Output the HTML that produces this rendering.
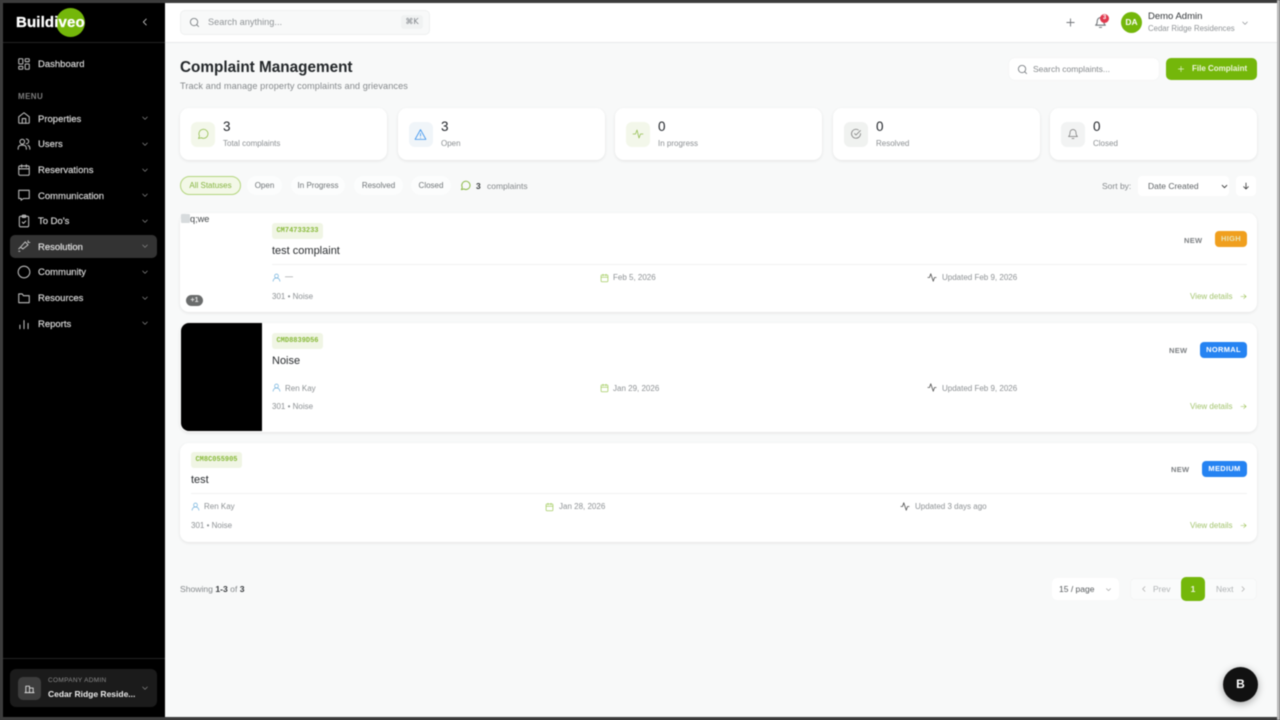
<!DOCTYPE html>
<html lang="en"><head><meta charset="utf-8"><title>Complaint Management</title>
<style>
*{box-sizing:border-box}
html,body{margin:0;padding:0;width:1280px;height:720px;overflow:hidden;background:#3a3a3a;font-family:"Liberation Sans","DejaVu Sans",sans-serif;color:#1f2328}
.a{position:absolute;white-space:nowrap}
svg{position:absolute;fill:none;stroke:currentColor;stroke-width:2;stroke-linecap:round;stroke-linejoin:round}
#app{position:absolute;left:0;top:0;width:1280px;height:720px;overflow:hidden;filter:blur(.5px)}
.nav{font-size:9.500px;color:#d6d6d6;left:38px;margin-top:1px;-webkit-text-stroke:.2px #d6d6d6}
.navi{color:#bdbdbd;stroke-width:1.800}
.chev{color:#8a8a8a}
.card{position:absolute;background:#fff;border-radius:9px;box-shadow:0 1px 3px rgba(0,0,0,.09)}
.tile{position:absolute;left:11px;top:14px;width:24px;height:25px;border-radius:6px}
.num{position:absolute;left:43px;top:11px;font-size:13.500px;color:#1f2328}
.lab{position:absolute;left:43px;top:30.500px;font-size:8px;color:#8b8f92;white-space:nowrap}
.tab{position:absolute;top:176px;height:19px;line-height:20px;font-size:8px;color:#6f7477;text-align:center;background:#fcfdfd;border-radius:10px}
.s{font-size:8px;color:#8d9194}
.code{position:absolute;height:16px;background:#f0f5e4;border-radius:3px;font:700 7px/16px "Liberation Mono",monospace;color:#88ba3a;text-align:center}
.title{font-size:11px;color:#2a2d30;margin-top:.500px}
.new{font-size:7.500px;font-weight:700;color:#7c7f82;letter-spacing:.3px}
.pr{position:absolute;height:16px;line-height:16px;border-radius:4px;color:#fff;font-size:7.500px;font-weight:700;text-align:center;letter-spacing:.3px}
.vd{font-size:8px;color:#a4c56f}
.line{position:absolute;height:1px;background:#f1f2f2}
</style></head><body>
<div id="app">
<!-- main -->
<div class="a" style="left:165px;top:3px;width:1112px;height:714px;background:#f8f9f9"></div>
<div class="a" style="left:165px;top:3px;width:1112px;height:40px;background:#fff;border-bottom:1px solid #e7e9ea"></div>
<div class="a" style="left:0;top:0;width:1280px;height:3px;background:#3c3c3c"></div>
<div class="a" style="left:0;top:717px;width:1280px;height:3px;background:#3c3c3c"></div>
<div class="a" style="left:1277px;top:0;width:3px;height:720px;background:#b9b9b9"></div>
<!-- sidebar -->
<div class="a" style="left:0;top:0;width:3px;height:720px;background:#3c3c3c"></div>
<div class="a" style="left:3px;top:3px;width:162px;height:714px;background:#000"></div>
<div class="a" style="left:3px;top:42px;width:162px;height:1px;background:#222"></div>
<div class="a" style="left:3px;top:658px;width:162px;height:1px;background:#222"></div>
<div class="a" style="left:56px;top:8px;width:29px;height:29px;border-radius:50%;background:#74b70a"></div>
<div class="a" style="left:16px;top:14px;font-size:15px;font-weight:700;color:#fff;letter-spacing:.15px;-webkit-text-stroke:.3px #fff">Buildiveo</div>
<svg style="left:140px;top:17px;color:#cfcfcf" width="10" height="10" viewBox="0 0 24 24"><path d="M15 5l-7 7 7 7"/></svg>

<svg class="navi" style="left:17px;top:57px" width="14" height="14" viewBox="0 0 24 24"><rect x="3" y="3" width="7" height="9" rx="1"/><rect x="14" y="3" width="7" height="5" rx="1"/><rect x="14" y="12" width="7" height="9" rx="1"/><rect x="3" y="16" width="7" height="5" rx="1"/></svg>
<div class="a nav" style="top:58px">Dashboard</div>
<div class="a" style="left:18px;top:91.500px;font-size:8px;font-weight:700;color:#7d7d7d;letter-spacing:.4px">MENU</div>

<svg class="navi" style="left:17px;top:111px" width="14" height="14" viewBox="0 0 24 24"><path d="M3 10l9-7 9 7v10a1 1 0 0 1-1 1H4a1 1 0 0 1-1-1z"/><path d="M9 21v-8h6v8"/></svg>
<div class="a nav" style="top:112.500px">Properties</div>
<svg class="navi" style="left:17px;top:137px" width="14" height="14" viewBox="0 0 24 24"><circle cx="9" cy="8" r="4"/><path d="M2 21v-2a5 5 0 0 1 5-5h4a5 5 0 0 1 5 5v2M16 3.500a4 4 0 0 1 0 8M22 21v-2a5 5 0 0 0-3-4.500"/></svg>
<div class="a nav" style="top:138px">Users</div>
<svg class="navi" style="left:17px;top:163px" width="14" height="14" viewBox="0 0 24 24"><rect x="3" y="5" width="18" height="16" rx="2"/><path d="M3 10h18M8 3v4M16 3v4"/></svg>
<div class="a nav" style="top:163.500px">Reservations</div>
<svg class="navi" style="left:17px;top:188px" width="14" height="14" viewBox="0 0 24 24"><path d="M21 4H3v14h4v3l4-3h10z"/></svg>
<div class="a nav" style="top:189.500px">Communication</div>
<svg class="navi" style="left:17px;top:214px" width="14" height="14" viewBox="0 0 24 24"><rect x="4" y="4" width="16" height="18" rx="2"/><rect x="9" y="2" width="6" height="4" rx="1"/><path d="M9 14l2 2 4-4"/></svg>
<div class="a nav" style="top:215px">To Do's</div>

<div class="a" style="left:10px;top:235px;width:147px;height:23px;background:#333;border-radius:5px"></div>
<svg class="navi" style="left:17px;top:239px" width="14" height="14" viewBox="0 0 24 24"><path d="M14 5l5 5-9 7-4-3zM6 14l-3 3M19 3v3M22 6h-3M3 21h2"/></svg>
<div class="a nav" style="top:240.500px;color:#e6e6e6">Resolution</div>
<svg class="navi" style="left:17px;top:265px" width="14" height="14" viewBox="0 0 24 24"><circle cx="12" cy="12" r="10"/></svg>
<div class="a nav" style="top:266px">Community</div>
<svg class="navi" style="left:17px;top:291px" width="14" height="14" viewBox="0 0 24 24"><path d="M3 5h6l2 3h10v12H3z"/></svg>
<div class="a nav" style="top:292px">Resources</div>
<svg class="navi" style="left:17px;top:317px" width="14" height="14" viewBox="0 0 24 24"><path d="M5 20v-6M12 20V6M19 20v-9"/></svg>
<div class="a nav" style="top:317.500px">Reports</div>

<svg class="chev" style="left:141px;top:114px" width="8" height="8" viewBox="0 0 24 24"><path d="M5 9l7 7 7-7"/></svg>
<svg class="chev" style="left:141px;top:140px" width="8" height="8" viewBox="0 0 24 24"><path d="M5 9l7 7 7-7"/></svg>
<svg class="chev" style="left:141px;top:166px" width="8" height="8" viewBox="0 0 24 24"><path d="M5 9l7 7 7-7"/></svg>
<svg class="chev" style="left:141px;top:191px" width="8" height="8" viewBox="0 0 24 24"><path d="M5 9l7 7 7-7"/></svg>
<svg class="chev" style="left:141px;top:217px" width="8" height="8" viewBox="0 0 24 24"><path d="M5 9l7 7 7-7"/></svg>
<svg class="chev" style="left:141px;top:242px" width="8" height="8" viewBox="0 0 24 24"><path d="M5 9l7 7 7-7"/></svg>
<svg class="chev" style="left:141px;top:268px" width="8" height="8" viewBox="0 0 24 24"><path d="M5 9l7 7 7-7"/></svg>
<svg class="chev" style="left:141px;top:294px" width="8" height="8" viewBox="0 0 24 24"><path d="M5 9l7 7 7-7"/></svg>
<svg class="chev" style="left:141px;top:319px" width="8" height="8" viewBox="0 0 24 24"><path d="M5 9l7 7 7-7"/></svg>

<div class="a" style="left:10px;top:669px;width:147px;height:38px;background:#1b1b1b;border-radius:6px"></div>
<div class="a" style="left:18px;top:677px;width:23px;height:23px;background:#3d3d3d;border-radius:5px"></div>
<svg style="left:24px;top:683px;color:#ddd;stroke-width:2" width="11" height="11" viewBox="0 0 24 24"><path d="M4 21V7h8v14M12 11h8v10M2 21h20"/></svg>
<div class="a" style="left:48px;top:677px;font-size:6.500px;color:#8c8c8c;letter-spacing:.3px">COMPANY ADMIN</div>
<div class="a" style="left:48px;top:689px;font-size:8.500px;font-weight:700;color:#ececec">Cedar Ridge Reside...</div>
<svg class="chev" style="left:141px;top:684px" width="8" height="8" viewBox="0 0 24 24"><path d="M5 9l7 7 7-7"/></svg>

<!-- topbar -->
<div class="a" style="left:180px;top:10px;width:250px;height:25px;background:#f8f9f9;border:1px solid #eef0f0;border-radius:5px"></div>
<svg style="left:189px;top:17px;color:#71767a;stroke-width:1.800" width="11" height="11" viewBox="0 0 24 24"><circle cx="11" cy="11" r="8"/><path d="M21 21l-4.300-4.300"/></svg>
<div class="a" style="left:208px;top:17px;font-size:9.200px;color:#8f9396">Search anything...</div>
<div class="a" style="left:401px;top:15px;width:22px;height:14px;background:#f0f2f2;border-radius:3px;font-size:8px;color:#80858a;text-align:center;line-height:14px;font-family:'DejaVu Sans',sans-serif">⌘K</div>

<svg style="left:1065px;top:17px;color:#72767a" width="11" height="11" viewBox="0 0 24 24"><path d="M12 4v16M4 12h16"/></svg>
<svg style="left:1094px;top:16px;color:#72767a" width="13" height="13" viewBox="0 0 24 24"><path d="M6 9a6 6 0 0 1 12 0c0 6 3 8 3 8H3s3-2 3-8M10 21h4"/></svg>
<div class="a" style="left:1100px;top:14px;width:9px;height:9px;border-radius:50%;background:#e0394e;color:#fff;font-size:6px;font-weight:700;text-align:center;line-height:9px">3</div>
<div class="a" style="left:1121px;top:12px;width:21px;height:21px;border-radius:50%;background:#74b70a;color:#fff;font-size:8.500px;font-weight:700;text-align:center;line-height:21px">DA</div>
<div class="a" style="left:1148px;top:11px;font-size:9.500px;color:#33373a">Demo Admin</div>
<div class="a" style="left:1148px;top:24px;font-size:7.800px;color:#909497">Cedar Ridge Residences</div>
<svg style="left:1241px;top:19px;color:#8c9093" width="8" height="8" viewBox="0 0 24 24"><path d="M5 9l7 7 7-7"/></svg>

<!-- header -->
<div class="a" style="left:180px;top:58.500px;font-size:15.300px;font-weight:700;color:#23272a">Complaint Management</div>
<div class="a" style="left:180px;top:80.500px;font-size:9.200px;color:#84888b;letter-spacing:.08px">Track and manage property complaints and grievances</div>
<div class="a" style="left:1009px;top:58px;width:150px;height:22px;background:#fff;border-radius:6px;box-shadow:0 0 1px rgba(0,0,0,.1)"></div>
<svg style="left:1017px;top:64px;color:#70757a;stroke-width:1.800" width="11" height="11" viewBox="0 0 24 24"><circle cx="11" cy="11" r="8"/><path d="M21 21l-4.300-4.300"/></svg>
<div class="a" style="left:1033px;top:64px;font-size:8.500px;color:#85898c">Search complaints...</div>
<div class="a" style="left:1166px;top:58px;width:91px;height:22px;background:#74b70a;border-radius:5px"></div>
<svg style="left:1177px;top:65px;color:#e8f3d2" width="8" height="8" viewBox="0 0 24 24"><path d="M12 4v16M4 12h16"/></svg>
<div class="a" style="left:1192px;top:64px;font-size:8px;font-weight:700;color:#eef6df">File Complaint</div>

<!-- stat cards -->
<div class="card" style="left:180px;top:108px;width:207px;height:52px"><div class="tile" style="background:#f3f7ea"></div><svg style="left:17px;top:20px;color:#8dbb45;stroke-width:1.500" width="12" height="12" viewBox="0 0 24 24"><path d="M3 21l2-5a9 9 0 1 1 3.500 3.500z"/></svg><div class="num">3</div><div class="lab">Total complaints</div></div>
<div class="card" style="left:398px;top:108px;width:207px;height:52px"><div class="tile" style="background:#f0f5f9"></div><svg style="left:16px;top:20px;color:#3c94ee;stroke-width:1.500" width="13" height="13" viewBox="0 0 24 24"><path d="M12 3L2 21h20zM12 10v5M12 18v.5"/></svg><div class="num">3</div><div class="lab">Open</div></div>
<div class="card" style="left:615px;top:108px;width:207px;height:52px"><div class="tile" style="background:#f3f7ea"></div><svg style="left:17px;top:20px;color:#93bd4f;stroke-width:1.500" width="12" height="12" viewBox="0 0 24 24"><path d="M2 12h5l3-8 4 16 3-8h5"/></svg><div class="num">0</div><div class="lab">In progress</div></div>
<div class="card" style="left:833px;top:108px;width:207px;height:52px"><div class="tile" style="background:#f0f2f0"></div><svg style="left:17px;top:20px;color:#777;stroke-width:1.500" width="12" height="12" viewBox="0 0 24 24"><path d="M21 11a9 9 0 1 1-4-7M9 11l3 3 9-9"/></svg><div class="num">0</div><div class="lab">Resolved</div></div>
<div class="card" style="left:1050px;top:108px;width:207px;height:52px"><div class="tile" style="background:#f2f3f3"></div><svg style="left:17px;top:20px;color:#777;stroke-width:1.500" width="12" height="12" viewBox="0 0 24 24"><path d="M6 9a6 6 0 0 1 12 0c0 6 3 8 3 8H3s3-2 3-8M10 21h4"/></svg><div class="num">0</div><div class="lab">Closed</div></div>

<!-- tabs -->
<div class="tab" style="left:180px;width:61px;background:#f3f8e7;border:1px solid #b3d57d;color:#86b441;line-height:18px">All Statuses</div>
<div class="tab" style="left:247px;width:35px">Open</div>
<div class="tab" style="left:291px;width:54px">In Progress</div>
<div class="tab" style="left:354px;width:49px">Resolved</div>
<div class="tab" style="left:411px;width:40px">Closed</div>
<svg style="left:460px;top:180px;color:#84b53c;stroke-width:2" width="11" height="11" viewBox="0 0 24 24"><path d="M3 21l2-5a9 9 0 1 1 3.500 3.500z"/></svg>
<div class="a" style="left:476px;top:181px;font-size:8.500px;font-weight:700;color:#3a3d40">3</div>
<div class="a" style="left:487px;top:181px;font-size:8.500px;color:#84888b">complaints</div>
<div class="a" style="left:1102px;top:181px;font-size:8.500px;color:#85898c">Sort by:</div>
<div class="a" style="left:1138px;top:176px;width:91px;height:20px;background:#fff;border-radius:4px"></div>
<div class="a" style="left:1148px;top:181px;font-size:8.500px;color:#5f6366">Date Created</div>
<svg style="left:1221px;top:183px;color:#333;stroke-width:3" width="7" height="7" viewBox="0 0 24 24"><path d="M4 8l8 8 8-8"/></svg>
<div class="a" style="left:1236px;top:176px;width:20px;height:20px;background:#fff;border-radius:4px"></div>
<svg style="left:1242px;top:182px;color:#333;stroke-width:2.400" width="8" height="8" viewBox="0 0 24 24"><path d="M12 3v18M5 14l7 7 7-7"/></svg>

<!-- row 1 -->
<div class="card" style="left:180px;top:213px;width:1077px;height:99px"></div>
<div class="a" style="left:181px;top:214px;width:9px;height:9px;background:#d7dbdd;border-radius:1px"></div>
<div class="a" style="left:190px;top:214px;font-size:9.200px;color:#44484b">q;we</div>
<div class="a" style="left:186px;top:295px;width:17px;height:11px;background:#6a6c6c;border-radius:6px;color:#e3e3e3;font-size:7px;font-weight:700;text-align:center;line-height:11px">+1</div>
<div class="code" style="left:272px;top:223px;width:51px">CM74733233</div>
<div class="a title" style="left:272px;top:244px">test complaint</div>
<div class="line" style="left:272px;top:264px;width:975px"></div>
<svg style="left:272px;top:273px;color:#6fb0dc;stroke-width:1.800" width="9" height="9" viewBox="0 0 24 24"><circle cx="12" cy="8" r="5"/><path d="M3 22a9 9 0 0 1 18 0"/></svg>
<div class="a s" style="left:285px;top:272px">—</div>
<svg style="left:600px;top:273px;color:#a4cc62;stroke-width:2" width="9" height="10" viewBox="0 0 24 24"><rect x="3" y="4" width="18" height="18" rx="2"/><path d="M3 10h18M8 2v4M16 2v4"/></svg>
<div class="a s" style="left:613px;top:272.500px">Feb 5, 2026</div>
<svg style="left:927px;top:272px;color:#555;stroke-width:2" width="10" height="11" viewBox="0 0 24 24"><path d="M2 12h4l3-9 6 18 3-9h4"/></svg>
<div class="a s" style="left:942px;top:272.500px">Updated Feb 9, 2026</div>
<div class="a s" style="left:272px;top:291.500px">301 • Noise</div>
<div class="a new" style="left:1184px;top:235.500px">NEW</div>
<div class="pr" style="left:1215px;top:231px;width:32px;background:#f09f1e;color:#e8e5b8">HIGH</div>
<div class="a vd" style="left:1190px;top:291.500px">View details</div>
<svg style="left:1240px;top:292.500px;color:#98c050" width="7" height="7" viewBox="0 0 24 24"><path d="M3 12h18M13 5l8 7-8 7"/></svg>

<!-- row 2 -->
<div class="card" style="left:180px;top:323px;width:1077px;height:109px"></div>
<div class="a" style="left:181px;top:323px;width:81px;height:108px;background:#000;border-radius:8px 0 0 8px"></div>
<div class="code" style="left:272px;top:333px;width:51px">CMD8839D56</div>
<div class="a title" style="left:272px;top:354px">Noise</div>
<svg style="left:272px;top:383px;color:#6fb0dc;stroke-width:1.800" width="9" height="9" viewBox="0 0 24 24"><circle cx="12" cy="8" r="5"/><path d="M3 22a9 9 0 0 1 18 0"/></svg>
<div class="a s" style="left:285px;top:383.500px">Ren Kay</div>
<svg style="left:600px;top:383px;color:#a4cc62;stroke-width:2" width="9" height="10" viewBox="0 0 24 24"><rect x="3" y="4" width="18" height="18" rx="2"/><path d="M3 10h18M8 2v4M16 2v4"/></svg>
<div class="a s" style="left:613px;top:383.500px">Jan 29, 2026</div>
<svg style="left:927px;top:382px;color:#555;stroke-width:2" width="10" height="11" viewBox="0 0 24 24"><path d="M2 12h4l3-9 6 18 3-9h4"/></svg>
<div class="a s" style="left:942px;top:383.500px">Updated Feb 9, 2026</div>
<div class="a s" style="left:272px;top:401.500px">301 • Noise</div>
<div class="a new" style="left:1169px;top:345.500px">NEW</div>
<div class="pr" style="left:1200px;top:342px;width:47px;background:#2583f2">NORMAL</div>
<div class="a vd" style="left:1190px;top:401.500px">View details</div>
<svg style="left:1240px;top:402.500px;color:#98c050" width="7" height="7" viewBox="0 0 24 24"><path d="M3 12h18M13 5l8 7-8 7"/></svg>

<!-- row 3 -->
<div class="card" style="left:180px;top:443px;width:1077px;height:99px"></div>
<div class="code" style="left:191px;top:452px;width:51px">CM8C055905</div>
<div class="a title" style="left:191px;top:473.500px">test</div>
<div class="line" style="left:191px;top:493px;width:1056px"></div>
<svg style="left:191px;top:502px;color:#6fb0dc;stroke-width:1.800" width="9" height="9" viewBox="0 0 24 24"><circle cx="12" cy="8" r="5"/><path d="M3 22a9 9 0 0 1 18 0"/></svg>
<div class="a s" style="left:204px;top:502px">Ren Kay</div>
<svg style="left:545px;top:502px;color:#a4cc62;stroke-width:2" width="9" height="10" viewBox="0 0 24 24"><rect x="3" y="4" width="18" height="18" rx="2"/><path d="M3 10h18M8 2v4M16 2v4"/></svg>
<div class="a s" style="left:559px;top:502px">Jan 28, 2026</div>
<svg style="left:900px;top:501px;color:#555;stroke-width:2" width="10" height="11" viewBox="0 0 24 24"><path d="M2 12h4l3-9 6 18 3-9h4"/></svg>
<div class="a s" style="left:915px;top:502px">Updated 3 days ago</div>
<div class="a s" style="left:191px;top:521px">301 • Noise</div>
<div class="a new" style="left:1171px;top:464.500px">NEW</div>
<div class="pr" style="left:1202px;top:461px;width:45px;background:#2583f2">MEDIUM</div>
<div class="a vd" style="left:1190px;top:521px">View details</div>
<svg style="left:1240px;top:522px;color:#98c050" width="7" height="7" viewBox="0 0 24 24"><path d="M3 12h18M13 5l8 7-8 7"/></svg>

<!-- pagination -->
<div class="a" style="left:180px;top:584px;font-size:8.600px;color:#85898c">Showing <b style="color:#3a3d40">1-3</b> of <b style="color:#3a3d40">3</b></div>
<div class="a" style="left:1052px;top:578px;width:67px;height:22px;background:#fff;border-radius:5px"></div>
<div class="a" style="left:1059px;top:584px;font-size:8.500px;color:#55595c">15 / page</div>
<svg style="left:1105px;top:586px;color:#999" width="7" height="7" viewBox="0 0 24 24"><path d="M5 9l7 7 7-7"/></svg>
<div class="a" style="left:1130px;top:578px;width:127px;height:22px;background:#fafbfb;border:1px solid #f4f5f5;border-radius:5px"></div>
<svg style="left:1140px;top:585px;color:#aaa" width="8" height="8" viewBox="0 0 24 24"><path d="M15 5l-7 7 7 7"/></svg>
<div class="a" style="left:1153px;top:584px;font-size:8.500px;color:#b0b3b5">Prev</div>
<div class="a" style="left:1181px;top:577px;width:24px;height:24px;background:#74b70a;border-radius:5px;color:#eef6df;font-size:8.500px;font-weight:700;text-align:center;line-height:24px">1</div>
<div class="a" style="left:1216px;top:584px;font-size:8.500px;color:#b0b3b5">Next</div>
<svg style="left:1239px;top:585px;color:#aaa" width="8" height="8" viewBox="0 0 24 24"><path d="M9 5l7 7-7 7"/></svg>

<!-- fab -->
<div class="a" style="left:1223px;top:667px;width:35px;height:35px;border-radius:50%;background:#111;box-shadow:0 2px 8px rgba(0,0,0,.35);color:#fff;font-size:12px;font-weight:700;text-align:center;line-height:35px">B</div>
</div>
</body></html>
